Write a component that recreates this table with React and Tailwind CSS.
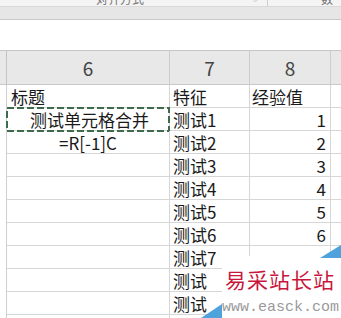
import React from "react";

const font = { fontFamily: '"Noto Sans CJK SC", "Noto Sans", sans-serif' };

const rows = [
  ["标题", "特征", "经验值"],
  ["", "测试1", "1"],
  ["=R[-1]C", "测试2", "2"],
  ["", "测试3", "3"],
  ["", "测试4", "4"],
  ["", "测试5", "5"],
  ["", "测试6", "6"],
  ["", "测试7", ""],
  ["", "测试", ""],
  ["", "测试", ""],
  ["", "", ""],
];

function Row({ cells, index }) {
  const [a, b, c] = cells;
  const merged = index === 1;
  const formula = index === 2;
  return (
    <div className="grid grid-cols-[7px_163px_80px_81px_1fr] h-[23px] border-b border-[#d6d6d6] text-[17px] leading-[23px] text-[#1a1a1a]">
      <div className="border-r border-[#cfcfcf] bg-white" />
      <div className={`relative border-r border-[#d6d6d6] overflow-visible whitespace-nowrap ${formula ? "text-center" : "pl-[3px]"}`}>
        {merged ? (
          <>
            <div className="text-center">测试单元格合并</div>
            <svg className="absolute left-[-1px] top-[-1px]" width="164" height="25" viewBox="0 0 164 25">
              <rect x="1" y="1" width="162" height="23" fill="none" stroke="#3d6b4c" strokeWidth="2" strokeDasharray="7 3" />
            </svg>
          </>
        ) : (
          <span className={index === 0 ? "pl-[1px]" : ""}>{a}</span>
        )}
      </div>
      <div className="border-r border-[#d6d6d6] pl-[3px] whitespace-nowrap">{b}</div>
      <div className={`border-r border-[#d6d6d6] whitespace-nowrap ${index === 0 ? "pl-[2px]" : "text-right pr-[4px]"}`}>{c}</div>
      <div />
    </div>
  );
}

export default function App() {
  return (
    <div className="relative w-[341px] h-[318px] overflow-hidden bg-white" style={font}>
      {/* ribbon edge with group labels cut off */}
      <div className="relative h-[7px] bg-[#f4f4f4] overflow-hidden border-b border-[#d9d9d9]">
        <div className="flex items-start text-[12px] text-[#777] leading-[14px] -mt-[8px]">
          <span className="ml-[96px]">对齐方式</span>
          <span className="ml-[108px] text-[9px] text-[#aaa]">⌵</span>
          <span className="ml-[8px] w-px h-[16px] bg-[#cfcfcf]" />
          <span className="ml-[53px]">数</span>
        </div>
      </div>
      <div className="h-[13px] bg-[#e6e6e6] border-b border-[#c8c8c8]" />
      <div className="h-[31px] bg-white border-b border-[#c6c6c6]" />

      {/* column headers */}
      <div className="grid grid-cols-[7px_163px_80px_81px_1fr] h-[34px] bg-[#e8e8e8] border-b border-[#c9c9c9] text-[19px] text-[#444] leading-[34px]">
        <div className="border-r border-[#c4c4c4]" />
        <div className="border-r border-[#cdcdcd] text-center">6</div>
        <div className="border-r border-[#cdcdcd] text-center">7</div>
        <div className="border-r border-[#cdcdcd] text-center">8</div>
        <div />
      </div>

      {rows.map((r, i) => (
        <Row key={i} cells={r} index={i} />
      ))}

      {/* site watermark */}
      <div className="absolute left-[222px] top-[256px] w-[119px] h-[62px] bg-white whitespace-nowrap">
        <div className="pl-[3px] pt-[10px] text-[21px] leading-[26px] tracking-[1px] text-[#c8163c]" style={{ fontFamily: '"Noto Sans CJK SC", serif' }}>
          易采站长站
        </div>
        <div className="pt-[8px] text-[15px] leading-[16px] text-[#9a9a9a]" style={{ fontFamily: '"Liberation Mono", monospace' }}>
          www.easck.com
        </div>
      </div>
      <svg className="absolute left-[320px] top-[245px]" width="21" height="13" viewBox="0 0 21 13">
        <polygon points="21,0 21,13 0,13" fill="#4ea3dc" />
      </svg>
      <svg className="absolute left-[201px] top-[304px]" width="21" height="14" viewBox="0 0 21 14">
        <polygon points="21,0 21,14 0,14" fill="#4ea3dc" />
      </svg>
    </div>
  );
}
